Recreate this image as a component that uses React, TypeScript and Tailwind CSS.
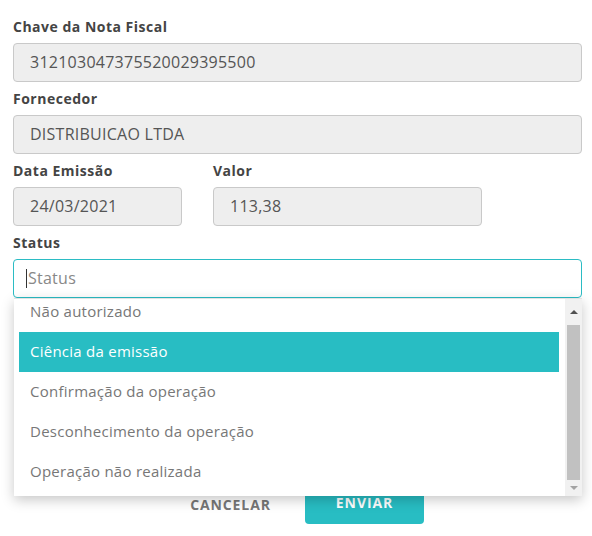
import React from "react";

const font = { fontFamily: '"Open Sans", "Liberation Sans", sans-serif' };

const Label = ({ children }: { children: React.ReactNode }) => (
  <div className="h-[33px] flex items-center text-[14px] font-bold text-[#444] tracking-[0.5px]">{children}</div>
);

const ReadOnly = ({ value, className = "" }: { value: string; className?: string }) => (
  <div
    className={`h-[39px] flex items-center rounded-[4px] border border-[#c9c9c9] bg-[#eeeeee] pl-[16px] pb-[1px] text-[16px] text-[#555] tracking-[0.25px] ${className}`}
  >
    {value}
  </div>
);

const options = [
  "Não autorizado",
  "Ciência da emissão",
  "Confirmação da operação",
  "Desconhecimento da operação",
  "Operação não realizada",
];

export default function App() {
  return (
    <div className="min-h-[536px] w-[592px] bg-white" style={font}>
      <div className="pl-[13px] pr-[10px] pt-[10px] w-[592px]">
        <Label>Chave da Nota Fiscal</Label>
        <ReadOnly value="312103047375520029395500" />
        <Label>Fornecedor</Label>
        <ReadOnly value="DISTRIBUICAO LTDA" />
        <div className="flex gap-[31px]">
          <div className="w-[169px]">
            <Label>Data Emissão</Label>
            <ReadOnly value="24/03/2021" />
          </div>
          <div className="w-[269px]">
            <Label>Valor</Label>
            <ReadOnly value="113,38" />
          </div>
        </div>
        <Label>Status</Label>
        <div className="relative">
          <div className="h-[39px] flex items-center rounded-[4px] border border-[#2bbcc4] bg-white pl-[12px] pb-[1px] text-[16px] text-[#888] tracking-[0.25px]">
            <span className="w-px h-[19px] bg-[#333] mr-[1px]" />
            Status
          </div>

          {/* dropdown aberto */}
          <div className="absolute left-[1px] right-0 top-[39px] h-[198px] z-10 flex bg-white border-t border-[#e2e2e2] shadow-[0_4px_12px_rgba(0,0,0,0.22)]">
            <div className="flex-1 overflow-hidden pl-[5px] pr-[6px]">
              <div className="mt-[-7px]">
                {options.map((o, i) => (
                  <div
                    key={o}
                    className={`h-[40px] flex items-center pl-[11px] pb-[2px] text-[15px] tracking-[0.25px] ${
                      i === 1 ? "bg-[#28bdc3] text-white" : "text-[#777]"
                    }`}
                  >
                    {o}
                  </div>
                ))}
              </div>
            </div>
            <div className="w-[17px] bg-[#f1f1f1] flex flex-col items-center">
              <div className="h-[26px] flex items-center justify-center">
                <span className="w-0 h-0 border-l-[4px] border-r-[4px] border-b-[4px] border-l-transparent border-r-transparent border-b-[#505050]" />
              </div>
              <div className="w-[13px] h-[155px] bg-[#c1c1c1]" />
              <div className="flex-1 flex items-center justify-center">
                <span className="w-0 h-0 border-l-[4px] border-r-[4px] border-t-[4px] border-l-transparent border-r-transparent border-t-[#a3a3a3]" />
              </div>
            </div>
          </div>
        </div>

        <div className="mt-[186px] flex justify-center gap-[15px]">
          <button className="w-[119px] h-[40px] rounded-[4px] text-[14px] font-bold text-[#777] tracking-[0.9px]">
            CANCELAR
          </button>
          <button className="w-[119px] h-[40px] rounded-[4px] bg-[#28bdc3] pb-[3px] text-[14px] font-bold text-white tracking-[0.9px]">
            ENVIAR
          </button>
        </div>
      </div>
    </div>
  );
}
